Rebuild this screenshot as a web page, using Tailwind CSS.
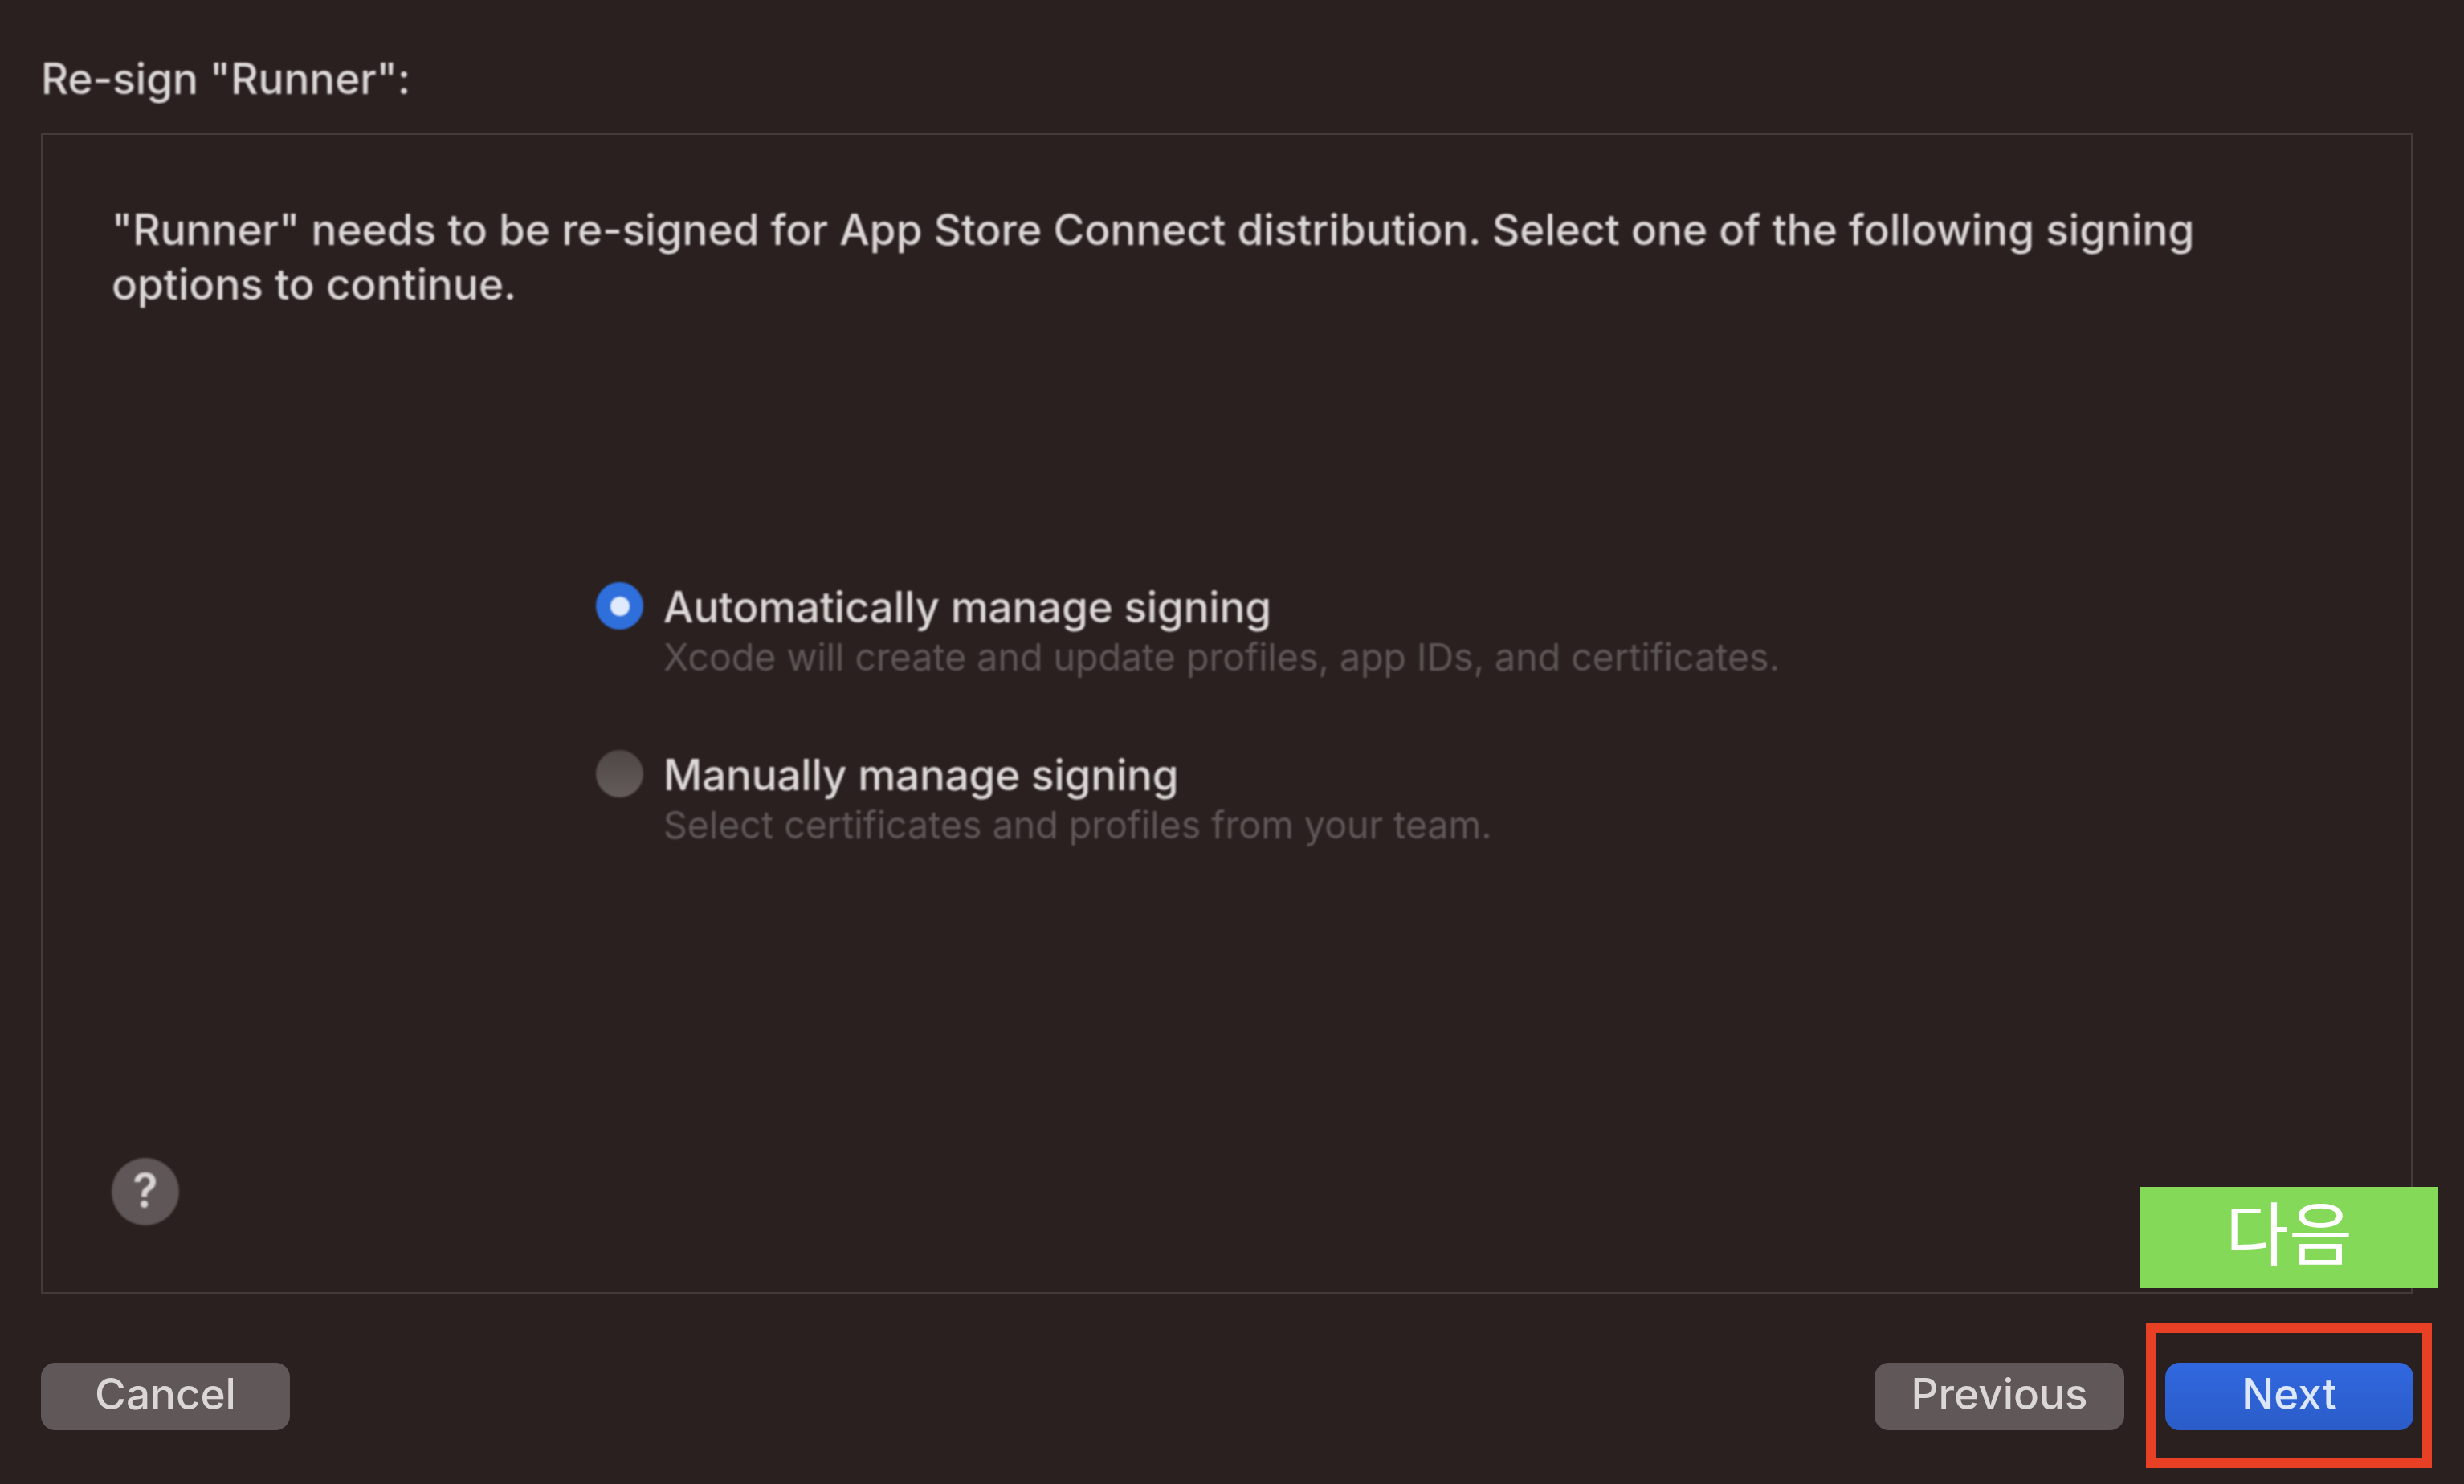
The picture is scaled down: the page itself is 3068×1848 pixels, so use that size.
<!DOCTYPE html>
<html lang="en">
<head>
    <meta charset="UTF-8">
    <title>Re-sign Runner</title>
    <script src="https://cdn.jsdelivr.net/npm/@tailwindcss/browser@4"></script>
</head>
<body class="bg-[#2a201f] m-0">
    <div class="relative w-[3068px] h-[1848px] overflow-hidden flex flex-col pl-[51px] pr-[63px] pt-[64px] font-['Inter','Noto_Sans_CJK_KR',sans-serif] font-medium text-[#dbd7d6] text-[53px]">
        <h1 class="h-[68px] leading-[68px] font-medium blur-[1px]">Re-sign "Runner":</h1>

        <div class="mt-[33px] h-[1447px] border-[3px] border-[#433b3a] flex flex-col pl-[85px] pr-[200px] pt-[84px] pb-[83px]">
            <p class="leading-[68px] tracking-[0.05px] blur-[1px]">"Runner" needs to be re-signed for App Store Connect distribution. Select one of the following signing options to continue.</p>

            <div class="mt-[337px] ml-[603px] flex flex-col gap-[85px]">
                <div class="flex gap-[25px]">
                    <div class="w-[59px] h-[59px] rounded-full bg-[#2f6fdc] flex items-center justify-center blur-[1px]">
                        <div class="w-[24px] h-[24px] rounded-full bg-[#dfeafc]"></div>
                    </div>
                    <div class="blur-[1px]">
                        <div class="leading-[62px] tracking-[-0.2px]">Automatically manage signing</div>
                        <div class="leading-[62px] text-[#5f5858] text-[46.5px] font-normal">Xcode will create and update profiles, app IDs, and certificates.</div>
                    </div>
                </div>
                <div class="flex gap-[25px]">
                    <div class="w-[59px] h-[59px] rounded-full bg-gradient-to-b from-[#4e4746] to-[#645c5b] blur-[1px]"></div>
                    <div class="blur-[1px]">
                        <div class="leading-[62px] tracking-[-0.2px]">Manually manage signing</div>
                        <div class="leading-[62px] text-[#5f5858] text-[46.5px] font-normal">Select certificates and profiles from your team.</div>
                    </div>
                </div>
            </div>

            <div class="mt-auto w-[84px] h-[84px] rounded-full bg-[#5f5757] flex items-center justify-center pb-[4px] text-[58px] font-semibold text-[#d8d4d3] blur-[1px]">?</div>
        </div>

        <div class="mt-[85px] flex items-center">
            <button class="w-[310px] h-[84px] pb-[6px] rounded-[18px] bg-[#605858] font-medium blur-[0.5px]">Cancel</button>
            <div class="ml-auto flex gap-[51px]">
                <button class="w-[311px] h-[84px] pb-[6px] rounded-[18px] bg-[#605858] font-medium blur-[0.5px]">Previous</button>
                <button class="w-[309px] h-[84px] pb-[6px] rounded-[18px] bg-gradient-to-b from-[#3168e0] to-[#2b5cc8] text-[#dde7fb] font-medium blur-[0.5px]">Next</button>
            </div>
        </div>

        <div class="absolute left-[2664px] top-[1478px] w-[372px] h-[126px] pb-[6px] bg-[#84d958] flex items-center justify-center text-white text-[86px] font-normal">다음</div>
        <div class="absolute left-[2672px] top-[1648px] w-[356px] h-[180px] border-[12px] border-[#e84025]"></div>
    </div>
</body>
</html>
